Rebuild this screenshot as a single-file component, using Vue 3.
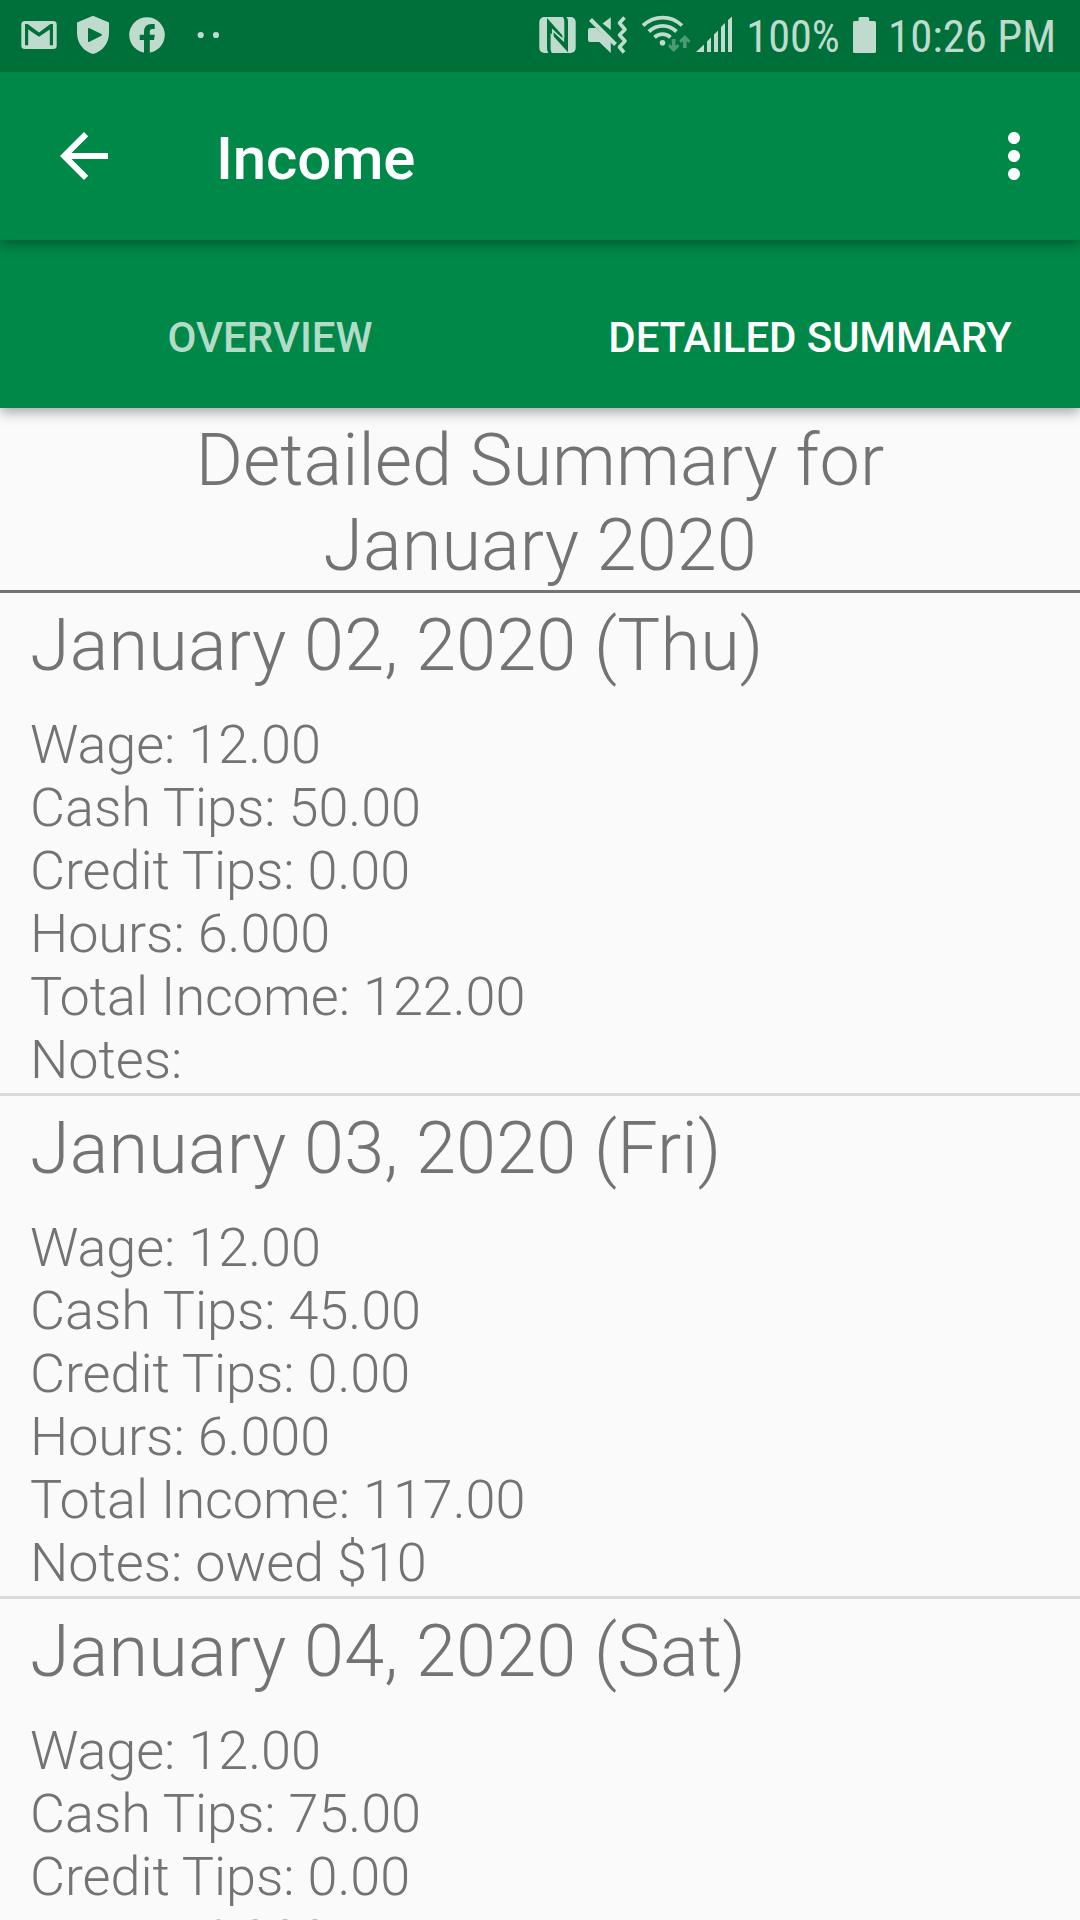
<template>
  <div class="screen">
    <!-- 状态栏 -->
    <div class="status-bar">
      <div class="status-group">
        <svg width="66" height="72" viewBox="0 0 66 72">
          <rect class="tint" x="21.3" y="21" width="35.4" height="28" rx="3.5" />
          <path class="cut" d="M25 45.300V24h2.600L39 32.400 50.400 24H53v21.300h-3.200V29.600L39 36.800 28.200 29.600v15.700z" />
        </svg>
        <svg width="54" height="72" viewBox="66 0 54 72">
          <path class="tint" d="M93 15.800 109 22.500V33c0 10-6.500 18.500-16 21-9.500-2.500-16-11-16-21V22.500z" />
          <path class="cut" d="M88 28.600q0-1 1-.6l12.400 6q1.400.9 0 1.800l-12.400 6.200q-1 .4-1-.6z" />
        </svg>
        <svg width="54" height="72" viewBox="120 0 54 72">
          <circle class="tint" cx="147" cy="35" r="17.8" />
          <path class="cut" d="M144 53V40h-4.300v-5.300h4.300V32c0-5.300 2.700-8 7.500-8h3.200v5h-2.300c-1.900 0-2.600.9-2.600 2.600v3.100h5L154 40h-4.200v13z" />
        </svg>
        <svg width="54" height="72" viewBox="174 0 54 72">
          <circle class="tint" cx="200.700" cy="35" r="3.100" />
          <circle class="tint" cx="216" cy="35" r="3.100" />
        </svg>
      </div>
      <div class="status-group">
        <!-- NFC -->
        <svg width="48" height="72" viewBox="534 0 48 72">
          <rect class="tint" x="539.300" y="17" width="36.400" height="36" rx="5" />
          <path class="cut" d="M547 18 564.300 37.500V22c0-2-.3-3.500-1.300-5h3.500c1 1.300 1.500 3 1.500 5v30.300L550.600 33v15c0 2 .4 3.600 1.400 5h-3.500c-1-1.300-1.500-3-1.500-5z" />
          <path class="line" d="M552.800 37V30.500L563.300 40.200V35" stroke-width="1.700" />
        </svg>
        <!-- 静音 / 振动 -->
        <svg width="54" height="72" viewBox="582 0 54 72">
          <path class="tint" d="M588 30q0-2 2-2h6l14.800 13.500V53L599.300 42H590q-2 0-2-2z" />
          <path class="tint" d="M610.800 17.200V30L602.500 23.500z" />
          <path class="cut-line" d="M592.800 17.500 617.500 43" stroke-width="3" />
          <path class="line" d="M590.500 19.500 615.500 44.500" stroke-width="4" />
          <path class="line" d="M624.500 17.500 619.500 23 625 29.500 619.500 35 625 41 619.500 47 624 52.500" stroke-width="3.600" stroke-linejoin="round" />
        </svg>
        <!-- WiFi -->
        <svg width="56" height="72" viewBox="636 0 56 72">
          <circle class="tint" cx="662.500" cy="42.800" r="2.800" />
          <path class="line" d="M643 25.500c11.500-10.500 28-10.500 39 0M648.800 31.500c8.300-7.500 19.600-7.500 27.700 0M654.500 37.400c4.500-4.300 11.500-4.300 16 0" stroke-width="3.800" />
          <g class="data">
            <path d="M671.800 39h3.700v6.800l2.500-1.900 1.300 2.500-5.600 5.600-5.600-5.600 1.300-2.500 2.400 1.900z" />
            <path d="M683 48h3.700v-6.800l2.400 1.900 1.200-2.500-5.500-5.600-5.500 5.600 1.200 2.500 2.500-1.900z" />
          </g>
        </svg>
        <!-- 信号 -->
        <svg width="50" height="72" viewBox="692 0 50 72">
          <path class="tint" d="M696 52 704 44.500V52zM707 52V41.500l4-4V52zM714 52V34.500l4-4V52zM721 52V27l4-4V52zM728 52V20l4-3.500V52z" />
        </svg>
        <svg width="104" height="72" viewBox="742 0 104 72">
          <text class="status-text" x="746.3" y="52" textLength="93.500" lengthAdjust="spacingAndGlyphs">100%</text>
        </svg>
        <svg width="36" height="72" viewBox="846 0 36 72">
          <path class="tint" d="M853.500 21h5v-2.500q0-1.500 1.500-1.500h7.700q1.500 0 1.500 1.500V21h5q1.800 0 1.800 1.500v29q0 1.500-1.500 1.500h-20q-1.500 0-1.500-1.500v-29q0-1.500 1.500-1.500z" />
        </svg>
        <svg width="198" height="72" viewBox="882 0 198 72">
          <text class="status-text" x="888" y="52" textLength="168" lengthAdjust="spacingAndGlyphs">10:26 PM</text>
        </svg>
      </div>
    </div>

    <!-- 标题栏 -->
    <header class="app-bar">
      <svg class="back" width="72" height="72" viewBox="0 0 24 24">
        <path d="M20 11H7.830l5.590-5.590L12 4l-8 8 8 8 1.410-1.410L7.830 13H20v-2z" />
      </svg>
      <h1 class="app-title">Income</h1>
      <svg class="more" width="72" height="72" viewBox="0 0 24 24">
        <path d="M12 8c1.100 0 2-.9 2-2s-.9-2-2-2-2 .9-2 2 .9 2 2 2zm0 2c-1.100 0-2 .9-2 2s.9 2 2 2 2-.9 2-2-.9-2-2-2zm0 6c-1.100 0-2 .9-2 2s.9 2 2 2 2-.9 2-2-.9-2-2-2z" />
      </svg>
    </header>

    <!-- 标签页 -->
    <nav class="tabs">
      <button
        v-for="tab in tabs"
        :key="tab"
        class="tab"
        :class="{ active: tab === activeTab }"
        @click="activeTab = tab"
      >{{ tab }}</button>
    </nav>

    <main class="content">
      <h2 class="summary-title">Detailed Summary for<br />January 2020</h2>
      <section v-for="day in days" :key="day.date" class="day">
        <h3 class="day-title">{{ day.date }}</h3>
        <div class="line-item">Wage: {{ day.wage }}</div>
        <div class="line-item">Cash Tips: {{ day.cash }}</div>
        <div class="line-item">Credit Tips: {{ day.credit }}</div>
        <div class="line-item">Hours: {{ day.hours }}</div>
        <div class="line-item">Total Income: {{ day.total }}</div>
        <div class="line-item">Notes: {{ day.notes }}</div>
      </section>
    </main>
  </div>
</template>

<script setup>
import { ref } from 'vue'

const tabs = ['Overview', 'Detailed Summary']
const activeTab = ref('Detailed Summary')

// 每日收入明细
const days = ref([
  { date: 'January 02, 2020 (Thu)', wage: '12.00', cash: '50.00', credit: '0.00', hours: '6.000', total: '122.00', notes: '' },
  { date: 'January 03, 2020 (Fri)', wage: '12.00', cash: '45.00', credit: '0.00', hours: '6.000', total: '117.00', notes: 'owed $10' },
  { date: 'January 04, 2020 (Sat)', wage: '12.00', cash: '75.00', credit: '0.00', hours: '6.000', total: '147.00', notes: '' }
])
</script>

<style>
body {
  margin: 0;
  background: #fafafa;
}
</style>

<style scoped>
.screen {
  display: flex;
  flex-direction: column;
  width: 1080px;
  height: 1920px;
  overflow: hidden;
  background: #fafafa;
  color: #737373;
  font-family: Roboto, sans-serif;
}

.status-bar {
  position: relative;
  display: flex;
  justify-content: space-between;
  flex: none;
  height: 72px;
  background: #00703a;
  z-index: 3;
}

.status-group {
  display: flex;
}

.status-group svg {
  display: block;
}

.tint,
.status-text {
  fill: #bfdbce;
}

.cut {
  fill: #00703a;
}

.line {
  fill: none;
  stroke: #bfdbce;
}

.cut-line {
  fill: none;
  stroke: #00703a;
}

.data {
  fill: #4c9b75;
}

.status-text {
  font-family: "Roboto Condensed", Roboto, sans-serif;
  font-size: 45px;
}

.app-bar {
  display: flex;
  align-items: center;
  flex: none;
  height: 168px;
  box-sizing: border-box;
  padding: 0 30px 0 48px;
  background: #008848;
  box-shadow: 0 4px 12px rgba(0, 0, 0, 0.35);
  z-index: 2;
}

.app-bar svg {
  fill: #fff;
}

.app-title {
  flex: 1;
  margin: 6px 0 0 96px;
  color: #fff;
  font-size: 60px;
  font-weight: 500;
  letter-spacing: -0.15px;
  line-height: 70px;
}

.tabs {
  display: grid;
  grid-template-columns: 1fr 1fr;
  flex: none;
  height: 168px;
  background: #008848;
  box-shadow: 0 4px 12px rgba(0, 0, 0, 0.35);
  z-index: 1;
}

.tab {
  padding: 28px 0 0;
  border: 0;
  background: none;
  color: #b2dbc8;
  font-family: inherit;
  font-size: 42px;
  font-weight: 500;
  line-height: 50px;
  text-transform: uppercase;
}

.tab.active {
  color: #fff;
  letter-spacing: -0.1px;
}

.summary-title,
.day-title {
  margin: 0;
  font-size: 72px;
  font-weight: 300;
  letter-spacing: 0.17px;
  line-height: 85px;
}

.summary-title {
  padding: 10px 0 2px;
  border-bottom: 3px solid #737373;
  letter-spacing: 0.08px;
  text-align: center;
}

.day {
  padding: 10px 30px 2px;
  border-bottom: 3px solid #dadada;
}

.day-title {
  margin-bottom: 25px;
}

.line-item {
  height: 63px;
  font-size: 54px;
  font-weight: 300;
  letter-spacing: -0.07px;
  line-height: 63px;
  white-space: nowrap;
}
</style>
